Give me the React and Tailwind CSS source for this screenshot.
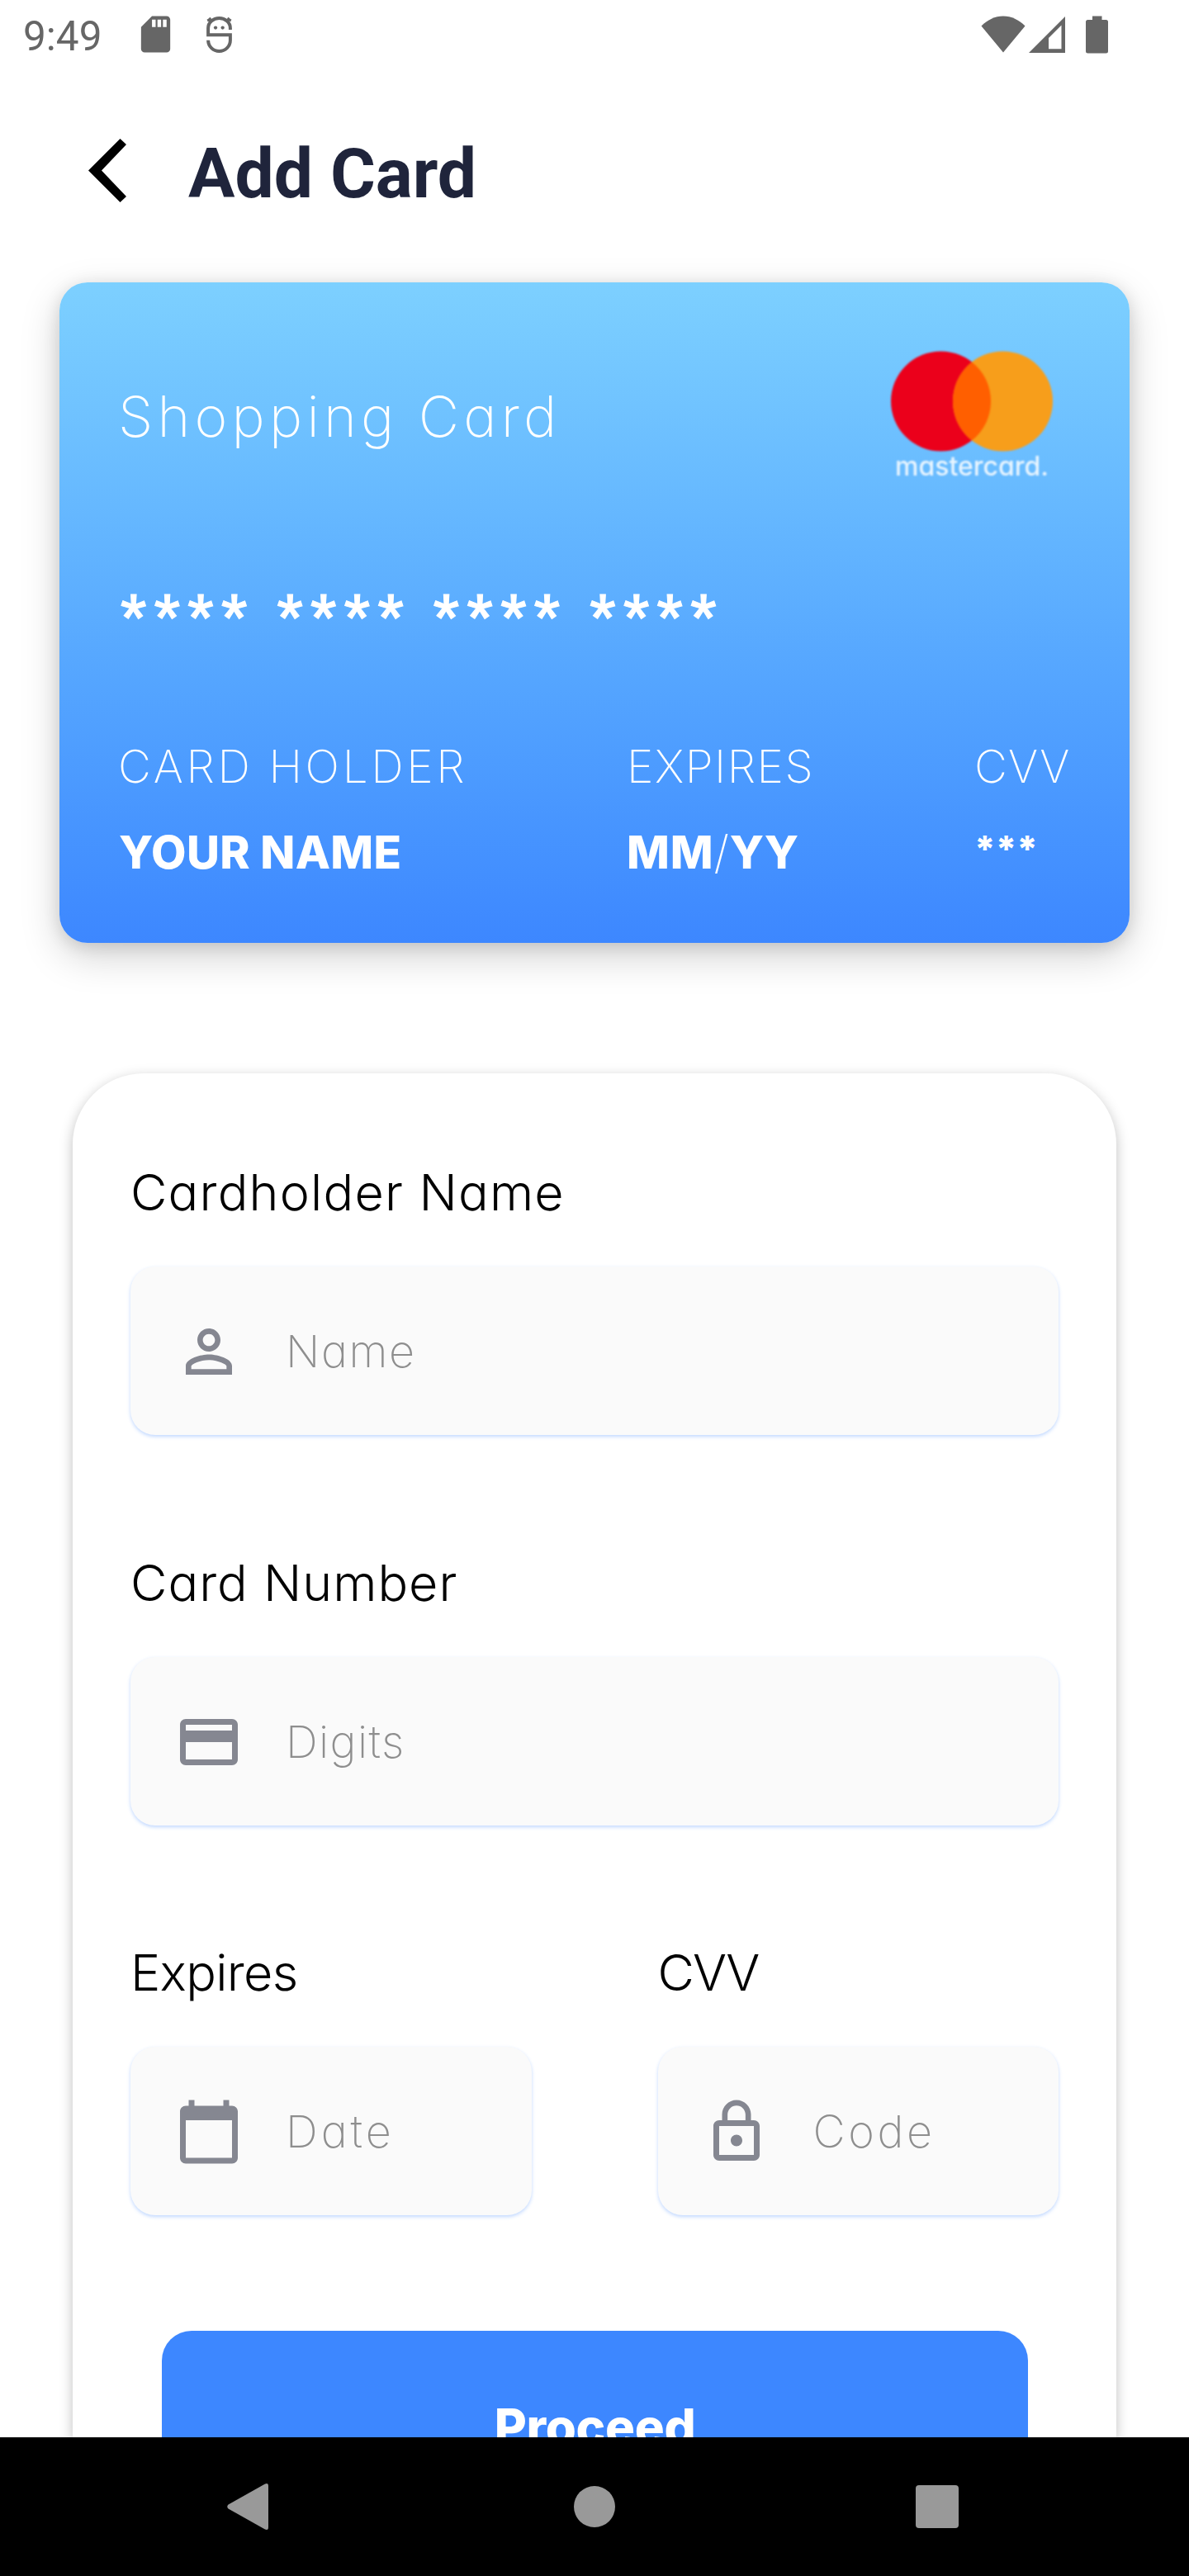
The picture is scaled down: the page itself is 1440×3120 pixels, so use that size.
function StatusBar() {
  return (
    <div className="flex h-[85px] shrink-0 items-start pt-[15px] text-[#666666]">
      <span className="ml-[28px] mt-[5px] w-[134px] font-['Roboto',sans-serif] text-[49.5px] leading-none">9:49</span>
      <svg className="size-[53px]" viewBox="0 0 24 24" fill="currentColor">
        <path d="M18 2h-8L4.02 8 4 20c0 1.1.9 2 2 2h12c1.1 0 2-.9 2-2V4c0-1.1-.9-2-2-2zm-6 6h-2V4h2v4zm3 0h-2V4h2v4zm3 0h-2V4h2v4z" />
      </svg>
      <svg className="ml-[35px] mt-[5px] h-[44px] w-[31px]" viewBox="0 0 93 133" fill="none" stroke="currentColor" strokeWidth="12">
        <path d="M87 48V42A40.5 36 0 0 0 6 42V67H87V87A40.5 40 0 0 1 6 87" />
        <path d="M10 5L20 19M3 15L16 10M83 5L73 19M90 15L77 10" strokeWidth="9" />
        <circle cx="33" cy="41" r="6.5" fill="currentColor" stroke="none" />
        <circle cx="59" cy="41" r="6.5" fill="currentColor" stroke="none" />
      </svg>
      <svg className="ml-auto mt-[4px] h-[45px] w-[54px]" viewBox="0 0 54 45" fill="currentColor">
        <path d="M27 44.5L.5 12.5C8 5 17 .5 27 .5S46 5 53.5 12.5Z" />
      </svg>
      <svg className="ml-[4px] mt-[5px] size-[44px]" viewBox="0 0 44 44" fill="currentColor">
        <path fillRule="evenodd" d="M0 44L44 0V44ZM24 26V39.3H39.5V10.5Z" />
      </svg>
      <svg className="ml-[25px] mr-[98px] mt-[4px] h-[46px] w-[27px]" viewBox="0 0 27 46" fill="currentColor">
        <path d="M8 .5h11.500V5H24.500a2.500 2.500 0 0 1 2.500 2.500V43a2.500 2.500 0 0 1-2.500 2.500H2.500A2.500 2.500 0 0 1 0 43V7.500A2.500 2.500 0 0 1 2.500 5H8Z" />
      </svg>
    </div>
  );
}

function Mastercard() {
  return (
    <div className="flex w-[196px] flex-col items-center blur-[0.8px]">
      <svg className="h-[122px] w-[196px]" viewBox="0 0 196 122">
        <circle cx="60.500" cy="61" r="60.5" fill="#eb001b" />
        <circle cx="135.500" cy="61" r="60.5" fill="#f79e1b" />
        <path d="M98 13.500a60.500 60.500 0 0 1 0 95a60.500 60.500 0 0 1 0-95Z" fill="#ff5f00" />
      </svg>
      <span className="mt-[2px] text-[32px] font-medium leading-none text-white/85">mastercard.</span>
    </div>
  );
}

function BankCard() {
  return (
    <div className="mx-[72px] h-[800px] shrink-0 rounded-[34px] bg-linear-to-b from-[#7dd0ff] to-[#3d87ff] pl-[72px] text-white shadow-[0_16px_48px_rgba(0,0,0,0.18),0_4px_20px_rgba(0,0,0,0.12)]">
      <div className="flex h-[370px] justify-between">
        <span className="-ml-px pt-[128px] text-[68px] font-[250] leading-none tracking-[5.2px]">Shopping Card</span>
        <div className="mr-[93px] pt-[83px]">
          <Mastercard />
        </div>
      </div>
      <div className="ml-[2px] h-[189px] font-['Roboto',sans-serif] text-[68px] font-bold leading-none tracking-[9.8px] [-webkit-text-stroke:1px_white]">**** **** **** ****</div>
      <div className="flex text-[55px] leading-none">
        <div className="flex w-[615px] flex-col gap-[49px]">
          <span className="-ml-px font-[250] tracking-[3.6px]">CARD HOLDER</span>
          <span className="font-extrabold tracking-[0.3px]">YOUR NAME</span>
        </div>
        <div className="flex w-[421px] flex-col gap-[49px]">
          <span className="font-[250] tracking-[1.5px]">EXPIRES</span>
          <span className="font-extrabold tracking-[0.8px]">
            MM<span className="font-extralight">/</span>YY
          </span>
        </div>
        <div className="flex flex-col gap-[50px]">
          <span className="font-[250] tracking-[1.2px]">CVV</span>
          <span className="text-[44px] font-extrabold">***</span>
        </div>
      </div>
    </div>
  );
}

const ICONS = {
  person:
    "M12 5.900c1.160 0 2.100.940 2.100 2.100s-.940 2.100-2.100 2.100S9.900 9.160 9.900 8s.940-2.100 2.100-2.100m0 9c2.970 0 6.100 1.460 6.100 2.100v1.100H5.900V17c0-.640 3.130-2.100 6.100-2.100M12 4C9.790 4 8 5.790 8 8s1.790 4 4 4 4-1.790 4-4-1.790-4-4-4zm0 9c-2.670 0-8 1.340-8 4v3h16v-3c0-2.660-5.330-4-8-4z",
  card:
    "M20 4H4c-1.110 0-1.990.890-1.990 2L2 18c0 1.110.890 2 2 2h16c1.110 0 2-.890 2-2V6c0-1.110-.890-2-2-2zm0 14H4v-6h16v6zm0-10H4V6h16v2z",
  calendar:
    "M20 3h-1V1h-2v2H7V1H5v2H4c-1.100 0-2 .900-2 2v16c0 1.100.900 2 2 2h16c1.100 0 2-.900 2-2V5c0-1.100-.900-2-2-2zm0 18H4V8h16v13z",
  lock:
    "M12 17c1.100 0 2-.900 2-2s-.900-2-2-2-2 .900-2 2 .900 2 2 2zm6-9h-1V6c0-2.760-2.240-5-5-5S7 3.240 7 6v2H6c-1.100 0-2 .900-2 2v10c0 1.100.900 2 2 2h12c1.100 0 2-.900 2-2V10c0-1.100-.900-2-2-2zM8.900 6c0-1.710 1.390-3.100 3.100-3.100s3.100 1.390 3.100 3.100v2H8.900V6zM18 20H6V10h12v10z",
};

function Field({ label, labelClass, icon, placeholder, placeholderClass }) {
  return (
    <div className="flex flex-1 flex-col">
      <span className={`h-[120px] text-[61px] font-light leading-none text-black ${labelClass}`}>{label}</span>
      <div className="flex h-[204px] items-center rounded-[30px] bg-[#fafafa] pl-[53px] pt-[2px] shadow-[0_2px_4px_rgba(61,135,255,0.32)]">
        <svg className="size-[84px]" viewBox="0 0 24 24" fill="#858791">
          <path d={ICONS[icon]} />
        </svg>
        <span className={`ml-[51px] text-[54px] font-[250] leading-none text-[#8e8e8e] ${placeholderClass}`}>{placeholder}</span>
      </div>
    </div>
  );
}

export default function App() {
  return (
    <div className="flex h-[3120px] w-[1440px] flex-col overflow-hidden bg-white font-['Inter',sans-serif] [font-feature-settings:'cv11']">
      <StatusBar />
      <div className="flex h-[257px] shrink-0 items-start pt-[83px]">
        <svg className="ml-[107px] h-[77px] w-[47px]" viewBox="0 0 47 77" fill="#000000">
          <path d="M38.500 0L46 7L16 38.500L46 70L38.500 77L0 38.500Z" />
        </svg>
        <h1 className="ml-[74px] mt-px font-['Roboto',sans-serif] text-[84px] font-bold leading-none text-[#1f243b]">Add Card</h1>
      </div>
      <div className="flex min-h-0 flex-1 flex-col">
        <BankCard />
        <div className="mx-[88px] mt-[158px] flex min-h-0 flex-1 flex-col rounded-t-[86px] bg-white px-[70px] pt-[114px] shadow-[0_5px_16px_rgba(0,0,0,0.25)]">
          <div className="flex h-[473px] shrink-0 items-start">
            <Field label="Cardholder Name" labelClass="tracking-[1.2px]" icon="person" placeholder="Name" placeholderClass="tracking-[1.6px]" />
          </div>
          <div className="flex h-[472px] shrink-0 items-start">
            <Field label="Card Number" labelClass="tracking-[1px]" icon="card" placeholder="Digits" placeholderClass="tracking-[1.4px]" />
          </div>
          <div className="flex h-[464px] shrink-0 items-start gap-[153px]">
            <Field label="Expires" labelClass="tracking-[-0.7px]" icon="calendar" placeholder="Date" placeholderClass="tracking-[4px]" />
            <Field label="CVV" labelClass="tracking-[-1.8px]" icon="lock" placeholder="Code" placeholderClass="tracking-[3.6px]" />
          </div>
          <button className="ml-[38px] mr-[37px] flex min-h-0 flex-1 items-start justify-center overflow-hidden rounded-t-[36px] bg-[#3d87ff] pt-[86px] text-[60px] font-extrabold leading-none tracking-[-0.3px] text-white">
            Proceed
          </button>
        </div>
      </div>
      <div className="relative z-10 flex h-[168px] shrink-0 items-center bg-black text-[#999999]">
        <svg className="ml-[275px] h-[56px] w-[50px]" viewBox="0 0 50 56" fill="currentColor">
          <path d="M1.500 25.500L45.500.8Q50-1.500 50 3V53Q50 57.500 45.500 55.200L1.500 30.500Q-1 28 1.500 25.500Z" />
        </svg>
        <div className="ml-[370px] size-[50px] rounded-full bg-[#999999]" />
        <div className="ml-[364px] size-[52px] rounded-[4px] bg-[#999999]" />
      </div>
    </div>
  );
}
